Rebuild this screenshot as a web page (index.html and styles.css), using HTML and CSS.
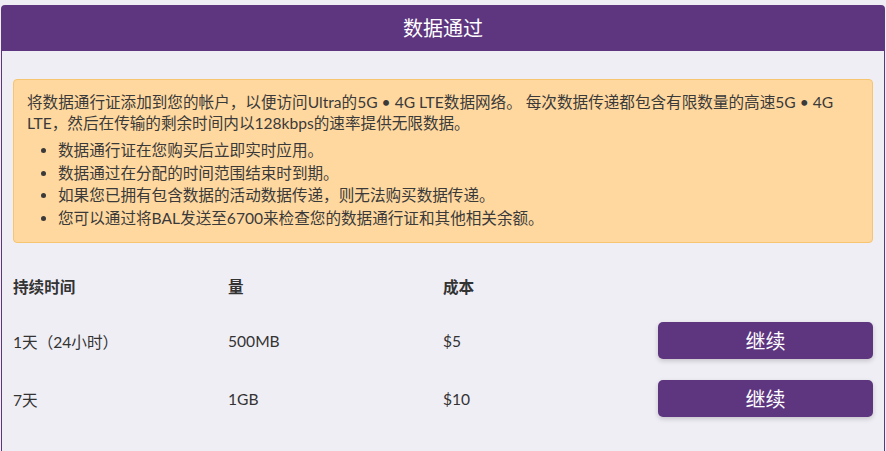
FILE: index.html
```html
<!DOCTYPE html>
<html lang="zh">
<head>
  <meta charset="UTF-8">
  <meta name="viewport" content="width=device-width, initial-scale=1.0">
  <title>数据通过</title>
  <link rel="stylesheet" href="styles.css">
</head>
<body>

<div class="card">
  <div class="card-header">数据通过</div>

  <div class="card-body">
    <div class="alert">
      <p>将数据通行证添加到您的帐户，以便访问Ultra的5G • 4G LTE数据网络。 每次数据传递都包含有限数量的高速5G • 4G LTE，然后在传输的剩余时间内以128kbps的速率提供无限数据。</p>
      <ul>
        <li>数据通行证在您购买后立即实时应用。</li>
        <li>数据通过在分配的时间范围结束时到期。</li>
        <li>如果您已拥有包含数据的活动数据传递，则无法购买数据传递。</li>
        <li>您可以通过将BAL发送至6700来检查您的数据通行证和其他相关余额。</li>
      </ul>
    </div>

    <div class="plans">
      <div class="plan-row plan-head">
        <div>持续时间</div>
        <div>量</div>
        <div>成本</div>
        <div></div>
      </div>
      <div class="plan-row">
        <div>1天（24小时）</div>
        <div>500MB</div>
        <div>$5</div>
        <div><button class="btn">继续</button></div>
      </div>
      <div class="plan-row">
        <div>7天</div>
        <div>1GB</div>
        <div>$10</div>
        <div><button class="btn">继续</button></div>
      </div>
    </div>
  </div>
</div>

</body>
</html>
```

FILE: styles.css
```css
body {
  margin: 0;
  background: #f0eef5;
  font-family: Lato, "Noto Sans CJK SC", sans-serif;
  color: #333;
}
.card {
  margin: 5px 1px 0 1px;
  border: 1px solid #5e367f;
  border-bottom: none;
  border-radius: 4px 4px 0 0;
  min-height: 460px;
}
.card-header {
  background: #5e367f;
  color: #fff;
  text-align: center;
  font-size: 20px;
  height: 45px;
  line-height: 45px;
}
.card-body {
  padding: 28px 11px 0 11px;
}
.alert {
  background: #ffd89f;
  border: 1px solid #f7c46f;
  border-radius: 4px;
  padding: 12px 13px 13px 13px;
  font-size: 15.6px;
  line-height: 21px;
  color: #3a3a3a;
}
.alert p {
  margin: 0 0 5px 0;
}
.alert ul {
  margin: 0;
  padding-left: 31px;
}
.alert li {
  line-height: 22.5px;
}
.plans {
  margin-top: 33px;
  font-size: 15.6px;
}
.plan-row {
  display: grid;
  grid-template-columns: repeat(4, 1fr);
  align-items: center;
  padding: 10px 0;
}
.plan-head {
  font-weight: bold;
  padding: 0 0 13px 0;
  line-height: 22px;
}
.plan-row + .plan-row {
  padding-top: 11px;
}
.btn {
  display: block;
  width: 100%;
  height: 37px;
  border: none;
  border-radius: 5px;
  background: #5e367f;
  color: #fff;
  font-family: Lato, "Noto Sans CJK SC", sans-serif;
  font-size: 20px;
  box-shadow: 0 2px 5px rgba(0,0,0,0.18);
  cursor: pointer;
}
.btn:hover {
  background: #4d2b69;
}
```
